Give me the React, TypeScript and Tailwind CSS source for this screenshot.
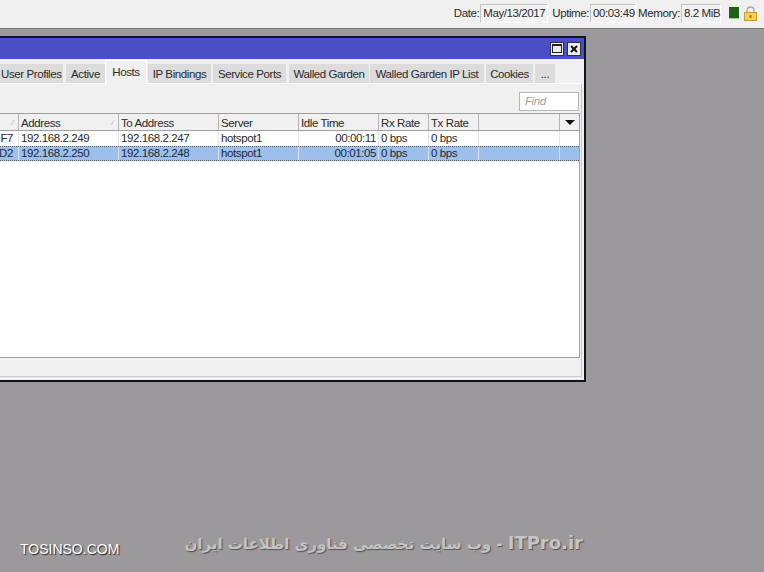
const tabs: [string, number, string][] = [
  ["User Profiles", 63, "mr-[3px]"],
  ["Active", 39, "mr-0"],
  ["Hosts", 42, "mr-[1px]"],
  ["IP Bindings", 63, "mr-[2px]"],
  ["Service Ports", 73, "mr-[3px]"],
  ["Walled Garden", 80, "mr-[1px]"],
  ["Walled Garden IP List", 114, "mr-[2px]"],
  ["Cookies", 47, "mr-[2px]"],
  ["...", 20, "mr-0"],
];

const cols = [19, 100, 100, 80, 80, 50, 50, 81];
const headers = ["", "Address", "To Address", "Server", "Idle Time", "Rx Rate", "Tx Rate", ""];
const rows = [
  ["F7", "192.168.2.249", "192.168.2.247", "hotspot1", "00:00:11", "0 bps", "0 bps", ""],
  ["D2", "192.168.2.250", "192.168.2.248", "hotspot1", "00:01:05", "0 bps", "0 bps", ""],
];

function Stat({ label, value, width, gap }: { label: string; value: string; width: number; gap: string }) {
  return (
    <div className={`flex items-center whitespace-nowrap ${gap}`}>
      <span>{label}</span>
      <span
        className="ml-[1px] flex h-[19px] items-center border border-[#c4c4c4] border-r-white border-b-white bg-[#f2f2f2] pl-[2px]"
        style={{ width }}
      >
        {value}
      </span>
    </div>
  );
}

export default function App() {
  return (
    <div className="flex h-[572px] w-[764px] flex-col overflow-hidden whitespace-nowrap bg-[#9b999b] font-['Liberation_Sans',Arial,sans-serif] text-[11.5px] leading-none tracking-[-0.4px] text-[#2a2a2a]">
      <div className="flex h-[29px] shrink-0 items-center justify-end border-b border-b-[#77787a] bg-[#f0f0f0] pb-[1px] pr-[7px]">
        <Stat label="Date:" value="May/13/2017" width={68} gap="mr-[4px]" />
        <Stat label="Uptime:" value="00:03:49" width={46} gap="mr-[2px]" />
        <Stat label="Memory:" value="8.2 MiB" width={40} gap="mr-[8px]" />
        <div className="mb-[1px] mr-[5px] h-[12px] w-[10px] border-b border-[#8fd08a] bg-[#1f5f17]" />
        <svg width="13" height="15" viewBox="0 0 13 15" className="mb-[1px]">
          <path d="M3 7V4.2C3 2.2 4.5 1 6.5 1S10 2.2 10 4.2V7" fill="none" stroke="#a8a8a0" strokeWidth="1.4" />
          <rect x="0.5" y="6.5" width="12" height="8" fill="#f3d24f" stroke="#c49a2a" />
          <rect x="5.5" y="9" width="2" height="3" fill="#a87c1c" />
        </svg>
      </div>

      <div className="ml-[-2px] mt-[7px] flex h-[346px] w-[588px] shrink-0 flex-col border-2 border-[#14141c] bg-[#f0f0f0]">
        <div className="flex h-[21px] shrink-0 items-center justify-end gap-[3px] bg-[#4a4fc4] pr-[3px]">
          <div className="flex h-[14px] w-[14px] items-center justify-center border border-[#333] bg-[#ececec]">
            <div className="h-[9px] w-[10px] border border-t-2 border-[#222]" />
          </div>
          <div className="flex h-[14px] w-[14px] items-center justify-center border border-[#333] bg-[#ececec]">
            <svg width="8" height="8" viewBox="0 0 8 8">
              <path d="M1 1L7 7M7 1L1 7" stroke="#111" strokeWidth="2" />
            </svg>
          </div>
        </div>

        <div className="flex h-[24px] shrink-0 items-end">
          {tabs.map(([name, w, gap], idx) => {
            const active = name === "Hosts";
            return (
              <div
                key={name}
                style={{ width: w }}
                className={`${gap} ${
                  active
                    ? "z-10 -mb-px flex h-[24px] shrink-0 items-start justify-center border border-b-0 border-white bg-[#f0f0f0] pt-[6px]"
                    : `flex h-[19px] shrink-0 items-center bg-[#dcdcdc] pt-[2px] ${idx === 0 ? "justify-start pl-[1px]" : "justify-center"}`
                }`}
              >
                {name}
              </div>
            );
          })}
        </div>

        <div className="mb-[3px] mr-[2px] flex min-h-0 flex-1 flex-col border-b border-r border-t border-b-[#c8c8c8] border-r-[#c8c8c8] border-t-white pr-[1px]">
          <div className="flex h-[29px] shrink-0 items-start justify-end pr-[1px] pt-[8px]">
            <div className="flex h-[19px] w-[60px] items-center border border-[#b4b4b4] bg-white pl-[5px] italic text-[#a0a0a0]">
              Find
            </div>
          </div>
          <div className="flex h-[245px] flex-col border border-l-0 border-[#a0a0a0] bg-white">
            <div className="flex h-[17px] shrink-0 border-b border-[#a0a0a0] bg-[#f0f0f0]">
              {headers.map((h, i) => (
                <div
                  key={i}
                  style={{ width: cols[i] }}
                  className="relative flex shrink-0 items-center border-r border-[#b4b4b4] pl-[2px] pt-[3px]"
                >
                  {h}
                  {i < 2 && <span className="absolute right-[5px] top-[5px] text-[7px] italic text-[#b0b0b0]">/</span>}
                </div>
              ))}
              <div className="flex flex-1 items-center justify-center">
                <div className="h-0 w-0 border-x-[5px] border-t-[5px] border-x-transparent border-t-[#111]" />
              </div>
            </div>
            {rows.map((r, ri) => (
              <div
                key={ri}
                className={
                  ri === 1
                    ? "flex h-[15px] shrink-0 border-y border-dotted border-[#52627a] bg-[#9dbfea] text-[#1c2a3c]"
                    : "flex h-[15px] shrink-0 bg-white"
                }
              >
                {r.map((c, i) => (
                  <div
                    key={i}
                    style={{ width: cols[i] }}
                    className={`flex shrink-0 items-center border-r ${ri === 1 ? "border-[#d4e2f4]" : "border-[#e4e4e4]"} ${
                      i === 4 ? "justify-end pr-[2px]" : i === 0 ? "justify-end pr-[5px]" : "pl-[2px]"
                    }`}
                  >
                    {c}
                  </div>
                ))}
              </div>
            ))}
          </div>
        </div>
      </div>

      <div className="mt-auto flex h-[46px] shrink-0 items-start justify-between pl-[20px] pr-[181px]">
        <span className="mt-[16px] text-[14px] tracking-normal text-white [text-shadow:1px_1px_1px_#222]">TOSINSO.COM</span>
        <span
          dir="rtl"
          className="mt-[8px] font-['DejaVu_Sans',sans-serif] text-[15px] font-bold tracking-normal text-[#c4c4c4] [text-shadow:1px_1px_1px_#555]"
        >
          <span className="text-[18px]">ITPro.ir</span> - وب سایت تخصصی فناوری اطلاعات ایران
        </span>
      </div>
    </div>
  );
}
